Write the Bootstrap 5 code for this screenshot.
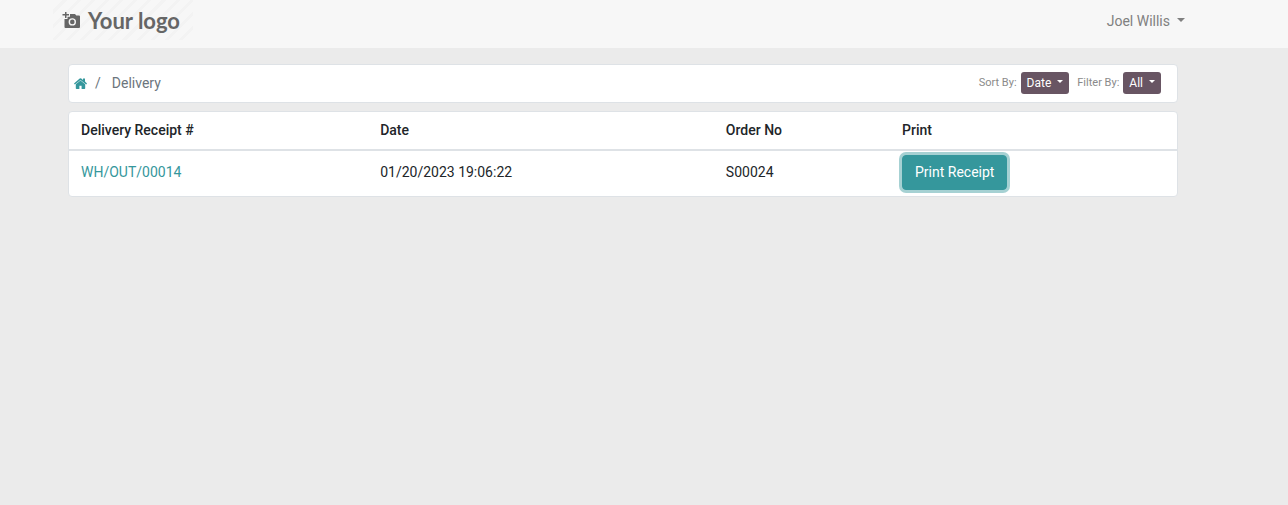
<!DOCTYPE html>
<html lang="en">
<head>
<meta charset="utf-8">
<meta name="viewport" content="width=device-width, initial-scale=1">
<title>Delivery</title>
<link href="https://cdn.jsdelivr.net/npm/bootstrap@5.3.0/dist/css/bootstrap.min.css" rel="stylesheet">
<style>
  body { font-family: Roboto, "Liberation Sans", sans-serif; font-size: 14px; line-height: 21px; color: #212529; background: #ebebeb; }
  .page-shell { padding-right: 42px; }
  .portal-container { max-width: 1140px; padding: 0 15px; }
  .top-header { background: #f7f7f7; height: 48px; }
  .brand-logo { height: 40px; width: 140px; margin-left: -15px; padding-left: 9px; gap: 8px; color: #666; text-decoration: none;
    font: 700 22px/42px Lato, "Open Sans", sans-serif;
    background: repeating-linear-gradient(135deg, #f7f7f7 0 7px, #f3f3f3 7px 10px); }
  .user-menu { color: #808080; font-size: 14px; line-height: 42px; margin-right: -7px; }
  .user-menu::after { margin-left: 7px; }
  .panel { background: #fff; border: 1px solid #dee2e6; border-radius: 4px; }
  .crumb-bar { min-height: 39px; padding: 0 16px 0 5px; }
  .breadcrumb { --bs-breadcrumb-item-padding-x: 8px; --bs-breadcrumb-divider-color: #6c757d; --bs-breadcrumb-item-active-color: #6c757d; }
  .breadcrumb .active::before { padding-right: 11px; }
  .breadcrumb svg { vertical-align: -1px; }
  a.teal { color: #35979c; text-decoration: none; }
  .list-tools { padding-bottom: 2px; }
  .tool-label { font-size: 11px; line-height: 22px; color: #8a8a8a; }
  .btn-sort { --bs-btn-color: #fff; --bs-btn-bg: #685563; --bs-btn-hover-color: #fff; --bs-btn-hover-bg: #574753; --bs-btn-padding-x: 6px; --bs-btn-padding-y: 2px; --bs-btn-font-size: 12px; --bs-btn-line-height: 18px; --bs-btn-border-radius: 3px; --bs-btn-border-width: 0px; }
  .btn-sort::after { margin-left: 6px; }
  .receipts { --bs-table-bg: transparent; table-layout: fixed; }
  .receipts th { padding: 8px 12px; font-weight: 500; border-bottom: 2px solid #dee2e6; }
  .receipts td { padding: 4px 12px 6px; height: 46px; border: 0; }
  .receipts .w-receipt { width: 27%; }
  .receipts .w-date { width: 31.2%; }
  .receipts .w-order { width: 15.9%; }
  .btn-print { --bs-btn-color: #fff; --bs-btn-bg: #35979c; --bs-btn-hover-color: #fff; --bs-btn-hover-bg: #2d8185; --bs-btn-padding-x: 12px; --bs-btn-padding-y: 6px; --bs-btn-font-size: 14px; --bs-btn-line-height: 21px; --bs-btn-border-radius: 4px; --bs-btn-border-color: #35979c; box-shadow: 0 0 0 3px #a6d1d3; }
</style>
</head>
<body>
<header class="top-header">
  <div class="page-shell">
    <div class="container portal-container d-flex justify-content-between">
      <a class="brand-logo d-flex" href="#">
        <svg class="align-self-center" width="18" height="18" viewBox="0 0 18 18" fill="#666" aria-hidden="true">
          <path d="M3 1h1.500v2H7v1.500H4.500V7H3V4.500H.5V3H3z"/>
          <path fill-rule="evenodd" d="M8 3h5l1.300 1.500H17q1 0 1 1V16q0 1-1 1H3.500q-1 0-1-1V8h3V5.700H8zM10.300 7.200a3.700 3.700 0 1 0 0 7.400 3.700 3.700 0 0 0 0-7.400z"/>
          <circle cx="10.300" cy="10.900" r="2.300"/>
        </svg>
        <span>Your logo</span>
      </a>
      <button type="button" class="user-menu btn border-0 p-0 dropdown-toggle" data-bs-toggle="dropdown">Joel Willis</button>
    </div>
  </div>
</header>
<main class="page-shell pt-3">
  <div class="container portal-container">
    <div class="panel crumb-bar d-flex flex-wrap justify-content-between align-items-center mb-2">
      <nav aria-label="breadcrumb">
        <ol class="breadcrumb mb-0">
          <li class="breadcrumb-item"><a class="teal" href="#" aria-label="Home"><svg width="13" height="11" viewBox="0 0 13 11" fill="currentColor" aria-hidden="true"><path d="M6.500 2.500 11.200 6.300v4q0 .7-.7.700H7.600V7.700H5.400V11H2.500q-.7 0-.7-.7v-4zM.8 6.500 0 5.400 5.700.5q.8-.6 1.600 0L9 1.900V.5h2v3.100l2 1.800-.8 1.100L6.500 1.900z"/></svg></a></li>
          <li class="breadcrumb-item active" aria-current="page">Delivery</li>
        </ol>
      </nav>
      <div class="list-tools d-flex align-items-center gap-2">
        <div class="d-flex gap-1">
          <span class="tool-label">Sort By:</span>
          <button type="button" class="btn btn-sort dropdown-toggle" data-bs-toggle="dropdown">Date</button>
        </div>
        <div class="d-flex gap-1">
          <span class="tool-label">Filter By:</span>
          <button type="button" class="btn btn-sort dropdown-toggle" data-bs-toggle="dropdown">All</button>
        </div>
      </div>
    </div>
    <div class="panel table-responsive">
      <table class="table receipts align-middle mb-0">
        <thead>
          <tr><th class="w-receipt" scope="col">Delivery Receipt #</th><th class="w-date" scope="col">Date</th><th class="w-order" scope="col">Order No</th><th scope="col">Print</th></tr>
        </thead>
        <tbody>
          <tr><td><a class="teal" href="#">WH/OUT/00014</a></td><td>01/20/2023 19:06:22</td><td>S00024</td><td><button type="button" class="btn btn-print">Print Receipt</button></td></tr>
        </tbody>
      </table>
    </div>
  </div>
</main>
<script src="https://cdn.jsdelivr.net/npm/bootstrap@5.3.0/dist/js/bootstrap.bundle.min.js"></script>
</body>
</html>
